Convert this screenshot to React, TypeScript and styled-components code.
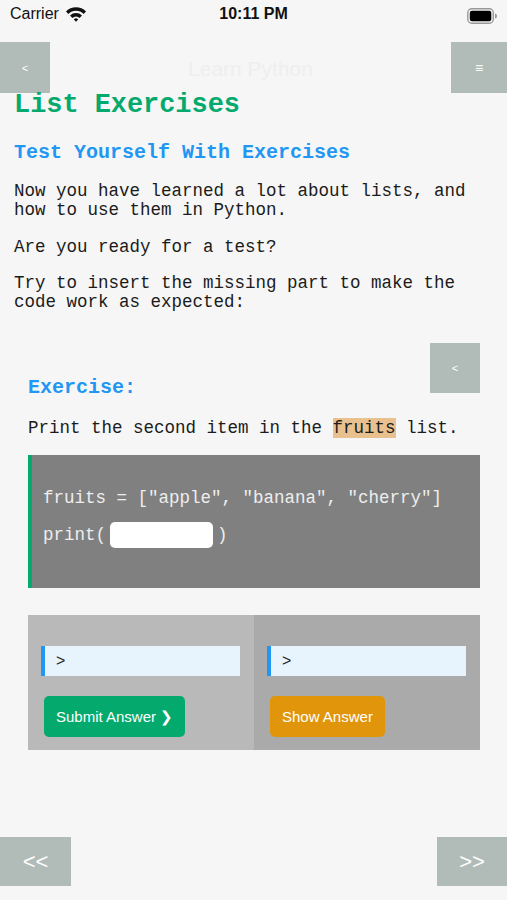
import React from "react";
import styled, { createGlobalStyle } from "styled-components";

const GlobalStyle = createGlobalStyle`
  html, body {
    margin: 0;
    padding: 0;
    background: #f6f6f6;
  }
  * { box-sizing: border-box; }
`;

const Page = styled.div`
  min-height: 100vh;
  display: flex;
  flex-direction: column;
  background: #f6f6f6;
`;

const StatusBar = styled.div`
  height: 42px;
  display: grid;
  grid-template-columns: 1fr auto 1fr;
  align-items: start;
  padding: 5px 10px 0 10px;
  font-family: "Liberation Sans", Arial, sans-serif;
  font-size: 16px;
  color: #111;
`;

const Carrier = styled.div`
  display: flex;
  align-items: center;
  gap: 6px;
`;

const Clock = styled.div`
  font-weight: bold;
  font-size: 16px;
`;

const Battery = styled.div`
  display: flex;
  justify-content: flex-end;
  padding-top: 3px;
`;

const Header = styled.div`
  height: 51px;
  display: flex;
  align-items: stretch;
  justify-content: space-between;
`;

const NavButton = styled.div<{ w: number; size?: number }>`
  width: ${p => p.w}px;
  background: #b1bbb8;
  color: #fff;
  display: flex;
  align-items: center;
  justify-content: center;
  font-family: "Liberation Sans", Arial, sans-serif;
  font-size: ${p => p.size || 11}px;
`;

const Title = styled.div`
  align-self: center;
  color: #eeeeee;
  font-family: "Liberation Sans", Arial, sans-serif;
  font-size: 21px;
  padding-top: 2px;
`;

const Content = styled.div`
  flex: 1;
  padding: 0 14px;
  font-family: "Liberation Mono", "Courier New", monospace;
  color: #1b1b1b;
`;

const H1 = styled.h1`
  margin: -2px 0 0 0;
  font-size: 26.9px;
  line-height: 28px;
  color: #04aa6d;
  font-weight: bold;
`;

const H2 = styled.h2`
  margin: 22px 0 0 0;
  font-size: 20px;
  line-height: 24px;
  color: #2196f3;
  font-weight: bold;
`;

const P = styled.p<{ top: number }>`
  margin: ${p => p.top}px 0 0 0;
  font-size: 17.5px;
  line-height: 19px;
`;

const Exercise = styled.div`
  margin-top: 31px;
  padding: 0 13px 0 14px;
`;

const ExHead = styled.div`
  display: flex;
  justify-content: space-between;
  align-items: flex-end;
`;

const ExTitle = styled.div`
  font-size: 20px;
  line-height: 22px;
  font-weight: bold;
  color: #2196f3;
  margin-bottom: -6px;
`;

const SmallToggle = styled.div`
  width: 50px;
  height: 50px;
  background: #b1bbb8;
  color: #fff;
  display: flex;
  align-items: center;
  justify-content: center;
  font-family: "Liberation Sans", Arial, sans-serif;
  font-size: 11px;
`;

const Task = styled.p`
  margin: 24px 0 0 0;
  font-size: 17.5px;
  line-height: 22px;
`;

const Mark = styled.span`
  background: #e8c18f;
`;

const CodeBox = styled.div`
  margin-top: 16px;
  height: 133px;
  background: #808080;
  border-left: 4px solid #04aa6d;
  padding: 32px 0 0 11px;
  color: #eeeeee;
  font-size: 17.5px;
`;

const CodeLine = styled.div`
  height: 22px;
  line-height: 22px;
  display: flex;
  align-items: center;
  white-space: pre;
  & + & {
    margin-top: 15px;
  }
`;

const Blank = styled.span`
  display: inline-block;
  width: 103px;
  height: 26px;
  background: #fff;
  border-radius: 5px;
  margin: 0 4px 0 4px;
`;

const Answers = styled.div`
  margin-top: 27px;
  height: 135px;
  display: grid;
  grid-template-columns: 226px 1fr;
`;

const AnswerCol = styled.div<{ bg: string }>`
  background: ${p => p.bg};
  padding: 31px 14px 0 13px;
  display: flex;
  flex-direction: column;
  align-items: flex-start;
`;

const AnswerInput = styled.div`
  width: 100%;
  height: 30px;
  background: #e8f4fd;
  border-left: 4px solid #2196f3;
  display: flex;
  align-items: center;
  padding-left: 11px;
  font-family: "Liberation Sans", Arial, sans-serif;
  font-size: 16px;
  color: #222;
`;

const ActionButton = styled.div<{ bg: string }>`
  margin: 20px 0 0 3px;
  height: 41px;
  padding: 0 12px;
  border-radius: 5px;
  background: ${p => p.bg};
  color: #fff;
  display: flex;
  align-items: center;
  font-family: "Liberation Sans", Arial, sans-serif;
  font-size: 15px;
`;

const Footer = styled.div`
  display: flex;
  justify-content: space-between;
  padding-bottom: 14px;
`;

const FooterButton = styled(NavButton)`
  height: 49px;
`;

const Wifi = () => (
  <svg width="22" height="16" viewBox="0 0 22 16">
    <path d="M1 5.5 A14 14 0 0 1 21 5.5 L18.6 8 A10.6 10.6 0 0 0 3.4 8 Z" fill="#111" />
    <path d="M5 9.6 A8.5 8.5 0 0 1 17 9.6 L14.6 12 A5 5 0 0 0 7.4 12 Z" fill="#111" />
    <path d="M8.8 13.4 A3.2 3.2 0 0 1 13.2 13.4 L11 15.8 Z" fill="#111" />
  </svg>
);

const BatteryIcon = () => (
  <svg width="30" height="16" viewBox="0 0 30 16">
    <rect x="0.8" y="0.8" width="25.5" height="14.4" rx="4" fill="none" stroke="#999" strokeWidth="1.4" />
    <rect x="2.8" y="2.8" width="21.5" height="10.4" rx="2.2" fill="#000" />
    <path d="M28 5.5 a2 2.5 0 0 1 0 5 Z" fill="#999" />
  </svg>
);

export default function App() {
  return (
    <Page>
      <GlobalStyle />
      <StatusBar>
        <Carrier>
          Carrier <Wifi />
        </Carrier>
        <Clock>10:11 PM</Clock>
        <Battery>
          <BatteryIcon />
        </Battery>
      </StatusBar>
      <Header>
        <NavButton w={50}>&lt;</NavButton>
        <Title>Learn Python</Title>
        <NavButton w={56} size={14}>≡</NavButton>
      </Header>
      <Content>
        <H1>List Exercises</H1>
        <H2>Test Yourself With Exercises</H2>
        <P top={17}>
          Now you have learned a lot about lists, and
          <br />
          how to use them in Python.
        </P>
        <P top={18}>Are you ready for a test?</P>
        <P top={17}>
          Try to insert the missing part to make the
          <br />
          code work as expected:
        </P>
        <Exercise>
          <ExHead>
            <ExTitle>Exercise:</ExTitle>
            <SmallToggle>&lt;</SmallToggle>
          </ExHead>
          <Task>
            Print the second item in the <Mark>fruits</Mark> list.
          </Task>
          <CodeBox>
            <CodeLine>fruits = ["apple", "banana", "cherry"]</CodeLine>
            <CodeLine>
              print(<Blank />)
            </CodeLine>
          </CodeBox>
          <Answers>
            <AnswerCol bg="#b9b9b9">
              <AnswerInput>&gt;</AnswerInput>
              <ActionButton bg="#04aa6d">Submit Answer ❯</ActionButton>
            </AnswerCol>
            <AnswerCol bg="#aaaaaa">
              <AnswerInput>&gt;</AnswerInput>
              <ActionButton bg="#e0950b">Show Answer</ActionButton>
            </AnswerCol>
          </Answers>
        </Exercise>
      </Content>
      <Footer>
        <FooterButton w={71} size={22}>&lt;&lt;</FooterButton>
        <FooterButton w={70} size={22}>&gt;&gt;</FooterButton>
      </Footer>
    </Page>
  );
}
